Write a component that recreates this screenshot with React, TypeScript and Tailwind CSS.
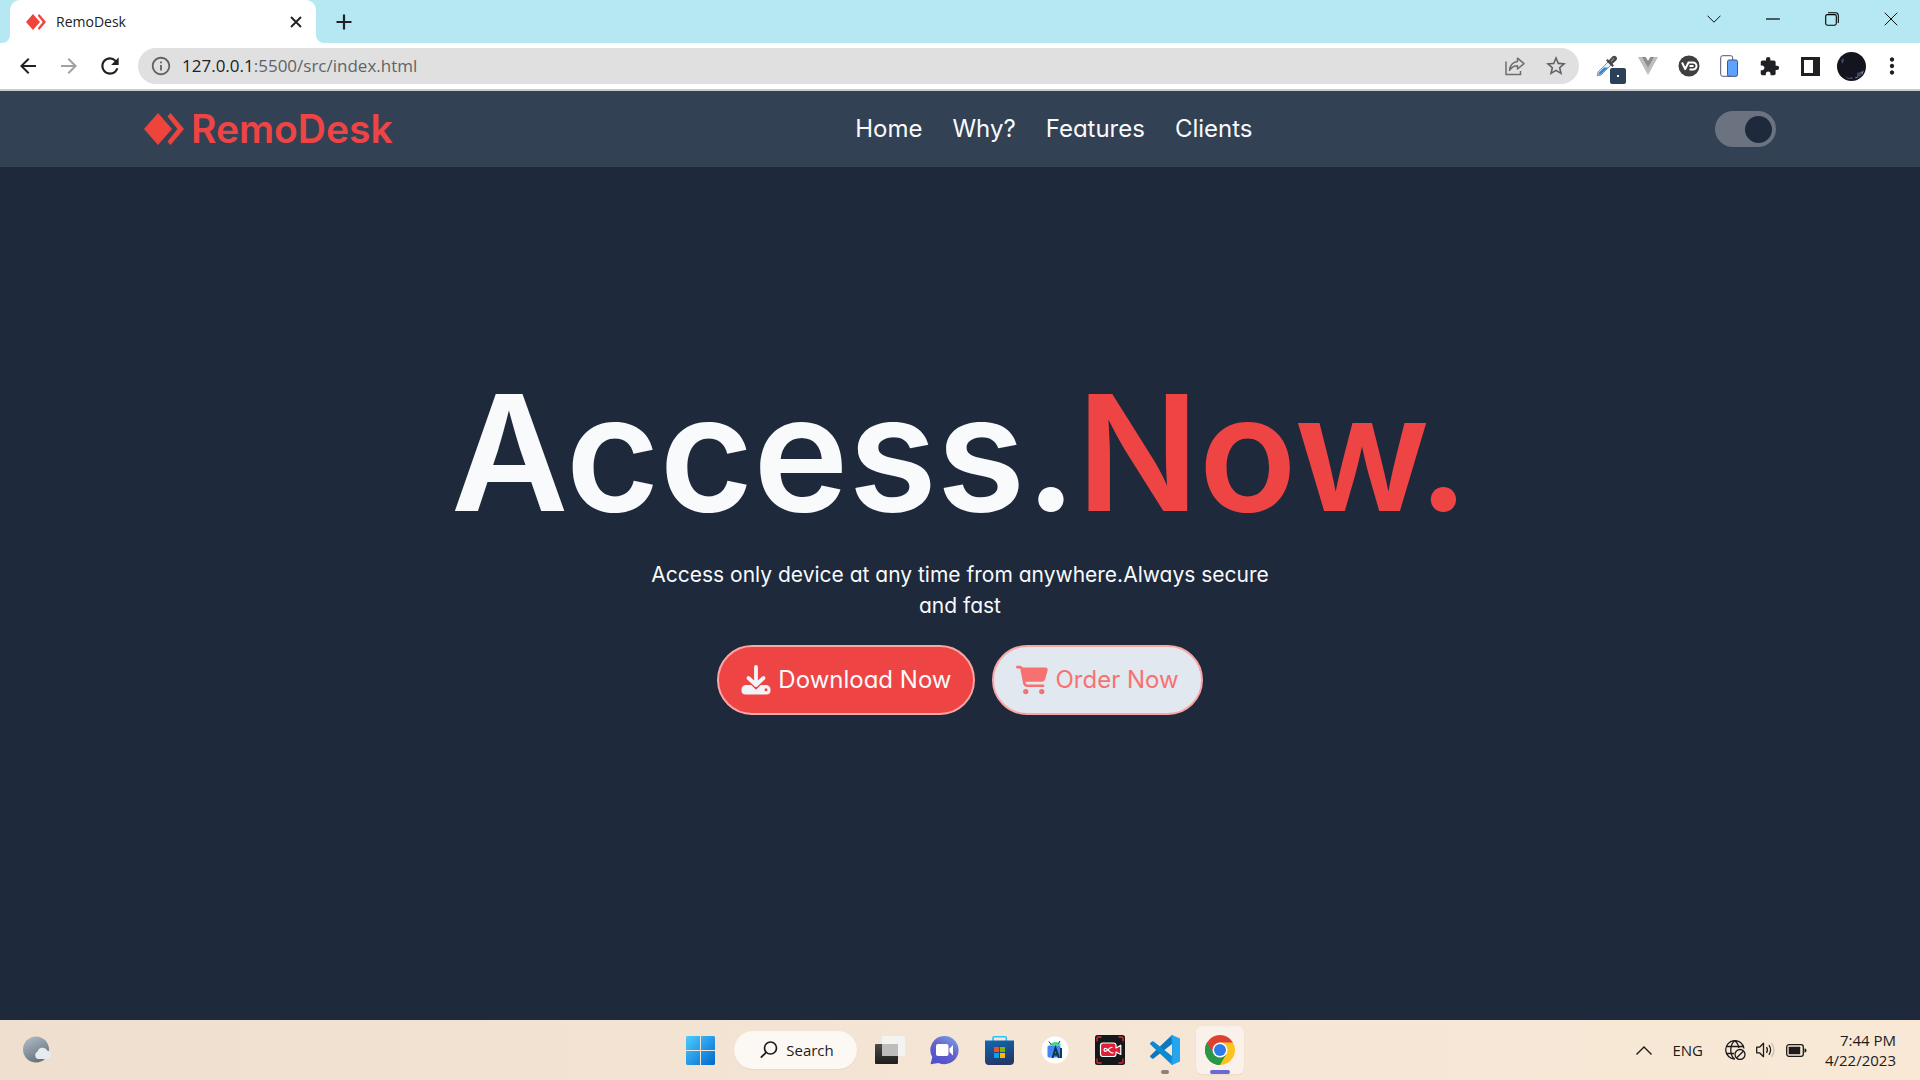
import type { ReactNode } from "react";
import { FaCartShopping } from "react-icons/fa6";
import { MdExtension, MdStarOutline, MdInfoOutline, MdRefresh, MdArrowBack, MdArrowForward, MdMoreVert } from "react-icons/md";

const UI = "font-['Open_Sans',sans-serif]";

function Diamond({ className }: { className: string }) {
  return (
    <svg viewBox="0 0 40 32" className={className} aria-hidden="true">
      <path d="M14 0 28 16 14 32 0 16Z" fill="#ef443b" />
      <path d="M26.5 0 40 16 26.5 32 23.5 28.5 33.5 16 23.5 3.5Z" fill="#ef443b" />
    </svg>
  );
}

function IconButton({ label, className = "", children }: { label: string; className?: string; children: ReactNode }) {
  return (
    <button type="button" aria-label={label} className={`flex items-center justify-center ${className}`}>
      {children}
    </button>
  );
}

function TabStrip() {
  return (
    <div className={`flex h-[43px] bg-[#b5e8f2] ${UI}`}>
      <div className="flex w-2.5 items-end bg-white">
        <div className="h-full w-full rounded-br-lg bg-[#b5e8f2]" />
      </div>
      <div className="flex w-[306px] items-center rounded-t-[10px] bg-white pr-2.5 pl-4">
        <Diamond className="h-4 w-5" />
        <span className="ml-2.5 flex-1 text-[14px] text-[#202124]">RemoDesk</span>
        <IconButton label="Close tab" className="size-5">
          <svg viewBox="0 0 12 12" className="size-3" stroke="#202124" strokeWidth="1.9">
            <path d="M1 1 11 11M11 1 1 11" />
          </svg>
        </IconButton>
      </div>
      <div className="w-2.5 bg-white">
        <div className="h-full w-full rounded-bl-lg bg-[#b5e8f2]" />
      </div>
      <IconButton label="New tab" className="w-9">
        <svg viewBox="0 0 16 16" className="size-4" stroke="#202124" strokeWidth="2.2">
          <path d="M8 0.5v15M0.5 8h15" />
        </svg>
      </IconButton>
      <div className="ml-auto flex h-[37px]">
        <IconButton label="Search tabs" className="w-[59px]">
          <svg viewBox="0 0 14 8" className="h-2 w-3.5" fill="none" stroke="#111">
            <path d="M0.5 0.7 7 7.2 13.5 0.7" />
          </svg>
        </IconButton>
        <IconButton label="Minimize" className="w-[59px]">
          <svg viewBox="0 0 14 2" className="h-0.5 w-3.5">
            <path d="M0 1h14" stroke="#000" strokeWidth="1.2" />
          </svg>
        </IconButton>
        <IconButton label="Restore" className="w-[59px]">
          <svg viewBox="0 0 14 14" className="size-3.5" fill="none" stroke="#000" strokeWidth="1.1">
            <rect x="0.7" y="2.6" width="10.6" height="10.6" rx="1.6" />
            <path d="M3 0.7h7.5q2.8 0 2.8 2.8V11" />
          </svg>
        </IconButton>
        <IconButton label="Close" className="w-[59px]">
          <svg viewBox="0 0 14 14" className="size-3.5" stroke="#111">
            <path d="M0.7 0.7 13.3 13.3M13.3 0.7 0.7 13.3" />
          </svg>
        </IconButton>
      </div>
    </div>
  );
}

function Toolbar() {
  return (
    <div className={`flex h-12 items-start border-b-2 border-[#c8cccb] bg-white pt-[5px] pl-[7px] ${UI}`}>
      <div className="flex h-9">
        <IconButton label="Back" className="w-[41px] text-[#202124]"><MdArrowBack className="size-6" /></IconButton>
        <IconButton label="Forward" className="w-[41px] text-[#a0a1a3]"><MdArrowForward className="size-6" /></IconButton>
        <IconButton label="Reload" className="w-[41px] text-[#202124]"><MdRefresh className="size-[26px]" /></IconButton>
      </div>
      <div className="ml-2 flex h-9 flex-1 items-center rounded-full bg-[#e0e0e0] px-3">
        <MdInfoOutline className="size-[22px] text-[#5f6368]" />
        <div className="ml-2.5 flex-1 text-[17px] text-[#5f6368]">
          <span className="text-[#202124]">127.0.0.1</span>:5500/src/index.html
        </div>
        <IconButton label="Share" className="w-[41px]">
          <svg viewBox="0 0 20 20" className="size-5" fill="none" stroke="#6b6d70" strokeWidth="1.5">
            <path d="M1 5.5V18.5H15.5V15" />
            <path d="M12.5 2.2 19 7.6 12.5 13V9.8Q7.5 9.8 4.5 14.4 5.3 6.3 12.5 5.4Z" strokeLinejoin="round" />
          </svg>
        </IconButton>
        <IconButton label="Bookmark" className="-mr-[9px] w-[41px] text-[#5f6368]"><MdStarOutline className="size-6" /></IconButton>
      </div>
      <div className="mr-2 ml-2 flex h-9 w-[325px] shrink-0">
        <IconButton label="Color picker" className="relative flex-1">
          <svg viewBox="0 0 22 22" className="size-[22px]">
            <path d="M1.2 20.8 2 17 12 7l3 3L5 20Z" fill="#e8f1fa" stroke="#8a9097" />
            <path d="M2.4 19.8 3 17.6 8 12.6h4L4.6 19.4Z" fill="#2f86d6" />
            <path d="M10 5.6 16.4 12l1.6-1.6-1.5-1.6 3.6-3.4a2.6 2.6 0 0 0-3.8-3.8L12.9 5.2 11.6 4Z" fill="#45494d" />
            <path d="M15 6.5 18 3.2" stroke="#8d9296" strokeWidth="1.2" />
          </svg>
          <span className="absolute top-5 right-0.5 flex size-4 items-center justify-center rounded-xs bg-[#2b4159]">
            <span className="size-0.5 bg-white" />
          </span>
        </IconButton>
        <IconButton label="Vue devtools" className="flex-1">
          <svg viewBox="0 0 20 18" className="h-[18px] w-5">
            <path d="M0 0h7.5L10 4.2 12.5 0H20L10 18Z" fill="#bdbdbd" />
            <path d="M4 0h3.7L10 4 12.3 0H16L10 10.5Z" fill="#8c8c8c" />
          </svg>
        </IconButton>
        <IconButton label="Video downloader" className="flex-1">
          <svg viewBox="0 0 22 22" className="size-[22px]" fill="none" stroke="#fff" strokeWidth="2">
            <circle cx="11" cy="11" r="10.5" fill="#3f3f3f" stroke="none" />
            <path d="M4 7.5 7.2 14 10.5 7.5H15a3.5 3.5 0 0 1 0 7h-3.5M11.5 11h4" strokeLinejoin="round" />
          </svg>
        </IconButton>
        <IconButton label="Mobile simulator" className="flex-1">
          <svg viewBox="0 0 18 22" className="h-[22px] w-[18px]" stroke="#4a5578">
            <rect x="0.7" y="0.7" width="12" height="20.6" rx="2" fill="#fff" />
            <rect x="7.5" y="5" width="10" height="16.3" rx="1.5" fill="#5ea4ff" />
          </svg>
        </IconButton>
        <IconButton label="Extensions" className="flex-1 text-[#202124]"><MdExtension className="size-[21px]" /></IconButton>
        <IconButton label="Side panel" className="flex-1">
          <svg viewBox="0 0 19 19" className="size-[19px]">
            <path d="M0 0h19v19H0ZM3 3v13h9V3Z" fill="#202124" fillRule="evenodd" />
          </svg>
        </IconButton>
        <IconButton label="Profile" className="flex-1">
          <svg viewBox="0 0 29 29" className="size-[29px]">
            <circle cx="14.5" cy="14.5" r="14.5" fill="#13141d" />
            <path d="M4 9 6 6l1 2-1.5 4ZM20 21l3-1 4-2-2 5-5 3ZM8 24l4 2 3-1 1 2-5 0Z" fill="#3f4766" />
            <path d="M24 20.5 26.5 19l-1 3ZM18 25l3 0-2 1.5Z" fill="#7d87ae" />
          </svg>
        </IconButton>
        <IconButton label="Menu" className="flex-1 text-[#202124]"><MdMoreVert className="size-[26px]" /></IconButton>
      </div>
    </div>
  );
}

function Navbar() {
  return (
    <header className="flex h-[76px] items-center justify-between bg-[#334155] px-36">
      <a href="#home" className="flex items-center gap-[7px] text-[39px] font-semibold text-[#ef4444]">
        <Diamond className="h-8 w-10" />
        RemoDesk
      </a>
      <nav className="flex gap-[30px] text-[24px] text-[#f8fafc]">
        <a href="#home">Home</a>
        <a href="#why">Why?</a>
        <a href="#features">Features</a>
        <a href="#clients">Clients</a>
      </nav>
      <label className="flex h-9 w-[61px] cursor-pointer items-center justify-end rounded-full bg-[#6b7280] pr-1">
        <input type="checkbox" defaultChecked aria-label="Dark mode" className="size-[27px] appearance-none rounded-full bg-[#1e293b]" />
      </label>
    </header>
  );
}

function Hero() {
  return (
    <main className="flex flex-1 flex-col items-center bg-[#1e293b] pt-[186px] text-[#f8fafc]">
      <h1 className="text-[161px] leading-[200px] font-semibold whitespace-nowrap">
        Access.<span className="text-[#ef4444]">Now.</span>
      </h1>
      <p className="mt-1.5 max-w-[660px] text-center text-[21px] leading-[31px]">
        Access only device at any time from anywhere.Always secure and fast
      </p>
      <div className="mt-6 flex gap-[17px] text-[24px]">
        <button type="button" className="flex h-[70px] items-center gap-[7px] rounded-full border-2 border-[#fca5a5] bg-[#ef4444] px-[22px]">
          <svg viewBox="0 0 30 30" className="size-[30px]" aria-hidden="true">
            <path d="M5 20h5.5l4.5 4.3 4.5-4.3H25a4.5 4.5 0 0 1 4.5 4.5v1A4 4 0 0 1 25.5 29.5h-21A4 4 0 0 1 .5 25.5v-1A4.5 4.5 0 0 1 5 20Z" fill="#f1f5f9" />
            <circle cx="25" cy="24.8" r="1.5" fill="#ef4444" />
            <path d="M15 2.5V19M8 13.5 15 20.5 22 13.5" fill="none" stroke="#ef4444" strokeWidth="6" />
            <path d="M15 2V19M7.5 13 15 20 22.5 13" fill="none" stroke="#f1f5f9" strokeWidth="3.8" strokeLinecap="round" strokeLinejoin="round" />
          </svg>
          Download Now
        </button>
        <button type="button" className="flex h-[70px] items-center gap-[7px] rounded-full border-2 border-[#fca5a5] bg-[#e2e8f0] px-[22px] text-[#f87171]">
          <FaCartShopping className="size-8" />
          Order Now
        </button>
      </div>
    </main>
  );
}

function Taskbar() {
  const slot = "flex size-12 items-center justify-center";
  return (
    <footer className={`flex h-[60px] items-center bg-linear-to-r from-[#eedfce] via-[#f5e5d5] to-[#f8e8d5] text-[#1b1b1b] ${UI}`}>
      <div className="flex flex-1 pl-[22px]">
        <button type="button" aria-label="Weather">
          <svg viewBox="0 0 30 28" className="h-7 w-[30px]">
            <defs>
              <linearGradient id="moon" x1="0" y1="0" x2="0.5" y2="1">
                <stop stopColor="#b3c0ce" />
                <stop offset="1" stopColor="#69737d" />
              </linearGradient>
            </defs>
            <circle cx="14" cy="13.5" r="13" fill="url(#moon)" />
            <path d="M16 23a4 4 0 0 1-.5-7.500 5.500 5.500 0 0 1 10-.8A4.200 4.200 0 0 1 25.500 23Z" fill="#e6ebf0" />
          </svg>
        </button>
      </div>
      <div className="flex items-center gap-[7px] pl-0.5">
        <button type="button" aria-label="Start" className={slot}>
          <svg viewBox="0 0 29 29" className="size-[29px]">
            <defs>
              <linearGradient id="win" x1="0" y1="0" x2="1" y2="1">
                <stop stopColor="#4cccff" />
                <stop offset="1" stopColor="#0069ce" />
              </linearGradient>
            </defs>
            <path d="M1 0h13v14H0V1ZM15 0h13l1 1v13H15ZM0 15h14v14H1l-1-1ZM15 15h14v13l-1 1H15Z" fill="url(#win)" />
          </svg>
        </button>
        <button type="button" className="mx-0.5 flex h-[38px] w-[123px] items-center justify-center gap-2 rounded-full bg-[#fcf8f3] pl-1 text-[15px] shadow-xs">
          <svg viewBox="0 0 18 18" className="size-[18px]" fill="none" stroke="#1b1b1b" strokeWidth="1.7">
            <circle cx="10.5" cy="7" r="6" />
            <path d="M6.2 11.3 0.8 16.7" />
          </svg>
          Search
        </button>
        <button type="button" aria-label="Task view" className={slot}>
          <svg viewBox="0 0 30 28" className="h-7 w-[30px]">
            <defs>
              <linearGradient id="tv" x1="0" y1="0" x2="0" y2="1">
                <stop stopColor="#4a4a4a" />
                <stop offset="1" stopColor="#1d1d1d" />
              </linearGradient>
            </defs>
            <rect y="8" width="23" height="20" rx="1" fill="url(#tv)" />
            <rect x="7" width="23" height="20" rx="1" fill="#f3f3f1" />
            <rect x="7" y="8" width="16" height="12" fill="#bdbdbd" />
          </svg>
        </button>
        <button type="button" aria-label="Chat" className={slot}>
          <svg viewBox="0 0 29 29" className="size-[29px]">
            <defs>
              <linearGradient id="chat" x1="0.9" y1="0" x2="0.3" y2="1">
                <stop stopColor="#74a4ee" />
                <stop offset="0.5" stopColor="#6a62c8" />
                <stop offset="1" stopColor="#4f50cf" />
              </linearGradient>
            </defs>
            <path d="M14.500 0a14 14 0 0 1 0 28.200 16 16 0 0 1-6-1.200L0.500 28.200 2.300 21A14 14 0 0 1 14.500 0Z" fill="url(#chat)" />
            <rect x="6" y="8" width="12.5" height="12" rx="2" fill="#fff" />
            <path d="M19.5 12.5 23 9v10.5l-3.5-3.5Z" fill="#fff" />
          </svg>
        </button>
        <button type="button" aria-label="Microsoft Store" className={slot}>
          <svg viewBox="0 0 29 29" className="size-[29px]">
            <defs>
              <linearGradient id="store" x1="0" y1="0" x2="0.3" y2="1">
                <stop stopColor="#0f68b4" />
                <stop offset="1" stopColor="#23396a" />
              </linearGradient>
            </defs>
            <path d="M8 6V1.500Q8 .8 9 .8H20.500Q21.300.8 21.300 1.800V6" fill="none" stroke="#2fc3f2" strokeWidth="1.6" />
            <path d="M0 4.500h29V25a4 4 0 0 1-4 4H4a4 4 0 0 1-4-4Z" fill="url(#store)" />
            <path d="M9 11h5v5H9Z" fill="#f25022" />
            <path d="M15 11h5v5h-5Z" fill="#7fba00" />
            <path d="M9 17h5v5H9Z" fill="#00a4ef" />
            <path d="M15 17h5v5h-5Z" fill="#ffb900" />
          </svg>
        </button>
        <button type="button" aria-label="Android Studio" className={slot}>
          <svg viewBox="0 0 28 28" className="size-7">
            <circle cx="14" cy="14" r="13.5" fill="#fff" />
            <path d="M9 9.500Q10 6 14.500 6T20 9.500Z" fill="#3ddc84" />
            <path d="M8 5.500l2 3M19 5l-1.500 2.500" stroke="#0d3550" strokeWidth="1" />
            <rect x="6.5" y="9.5" width="13" height="12" rx="1.5" fill="#4285f4" />
            <path d="M11.500 22 14.500 12l3.500 10M12.500 18.500h5M20 12v10" fill="none" stroke="#0b3248" strokeWidth="1.9" />
          </svg>
        </button>
        <button type="button" aria-label="Screen recorder" className={slot}>
          <svg viewBox="0 0 30 30" className="size-[30px]" fill="none">
            <rect width="30" height="30" rx="2.5" fill="#14181a" />
            <path d="M2 6.500V3.500Q2 2 3.500 2H6.500M23.500 2h3Q28 2 28 3.500v3M28 23.500v3q0 1.500-1.500 1.500h-3M6.500 28h-3Q2 28 2 26.500v-3" stroke="#e62a2f" strokeWidth="1.3" />
            <path d="M8 8h10.500Q21 8 21 10.500V13l4.800-2.800V19.500L21 17v2Q21 21.500 18.500 21.500H8Q5.500 21.500 5.500 19V10.500Q5.500 8 8 8Z" fill="#dd1f36" stroke="#fff" strokeWidth="1.2" strokeLinejoin="round" />
            <path d="M17.500 12.500Q15 12 13 14.800 9.500 18 9 14.800 9.500 11.800 13 14.800q3.500 4 5.500 3" stroke="#fff" strokeWidth="1.2" />
          </svg>
        </button>
        <button type="button" aria-label="Visual Studio Code" className={`relative ${slot}`}>
          <svg viewBox="0 0 30 30" className="size-[30px]">
            <path d="M22 0 30 3.500V26.500L22 30Z" fill="#23a5f0" />
            <path d="M22 0 3.500 17.500.5 20.500Q-.5 21 .3 22L2 23.500Q2.800 24 3.600 23.400L22 9Z" fill="#0f77bd" />
            <path d="M22 30 3.500 12.500 .5 9.500Q-.5 9 .3 8L2 6.500Q2.800 6 3.600 6.600L22 21Z" fill="#0b8ad4" />
            <path d="M21 1Q22 0 23 .4V29.600Q22 30 21 29L22 21V9Z" fill="#1f9de9" />
          </svg>
          <span className="absolute bottom-0 left-5 h-1 w-2 rounded-full bg-[#8a8178]" />
        </button>
        <button type="button" aria-label="Chrome" className={`relative rounded-md bg-[#faf1ea] shadow-xs ${slot}`}>
          <svg viewBox="0 0 30 30" className="size-[30px]">
            <path d="M15 15 2.010 7.500A15 15 0 0 1 27.990 7.500Z" fill="#df4031" />
            <path d="M15 15 15 30A15 15 0 0 1 2.010 7.500Z" fill="#2a9747" />
            <path d="M15 15 27.990 7.500A15 15 0 0 1 15 30Z" fill="#fcc31e" />
            <path d="M15 7.500H28L21.500 19 15 15Z" fill="#fcc31e" />
            <path d="M2 7.500 8.500 18.800 15 15V7.500Z" fill="#df4031" />
            <path d="M2.010 7.500 8.500 18.800 15 22.500 21.500 18.800 15 30A15 15 0 0 1 2.010 7.500Z" fill="#2a9747" />
            <circle cx="15" cy="15" r="7.5" fill="#fff" />
            <circle cx="15" cy="15" r="6" fill="#2f7bea" />
          </svg>
          <span className="absolute bottom-0 left-3.5 h-1 w-5 rounded-full bg-[#6a69d6]" />
        </button>
      </div>
      <div className="flex flex-1 items-center justify-end pr-6">
        <button type="button" aria-label="Show hidden icons">
          <svg viewBox="0 0 16 9" className="h-[9px] w-4" fill="none" stroke="#1b1b1b" strokeWidth="1.4">
            <path d="M0.5 8.5 8 1 15.5 8.5" />
          </svg>
        </button>
        <button type="button" className="ml-5 text-[15px]">ENG</button>
        <button type="button" aria-label="Network, volume and battery" className="ml-[22px] flex items-center gap-2.5">
          <svg viewBox="0 0 21 20" className="h-5 w-[21px]" fill="none" stroke="#1b1b1b" strokeWidth="1.3">
            <path d="M10 19A9.200 9.200 0 1 1 19 8.500M9.500 19C4.500 15 4.500 4.500 9.800.8 12.600 3 13.600 5.500 13.800 8M1.500 6.500h17M1.500 13.500H9" />
            <circle cx="15" cy="14.5" r="5" />
            <path d="M11.5 18 18.5 11" />
          </svg>
          <svg viewBox="0 0 20 16" className="h-4 w-5" fill="none" stroke="#1b1b1b" strokeWidth="1.3">
            <path d="M.7 5.200H3.500L7.500 1.300V14.700L3.500 10.800H.7Z" strokeLinejoin="round" />
            <path d="M10.500 5.200q1.800 2.800 0 5.600M13 3.200q3.200 4.800 0 9.600" />
            <path d="M15.500 1.200q5 6.800 0 13.600" stroke="#c9bfb2" />
          </svg>
          <svg viewBox="0 0 21 13" className="h-[13px] w-[21px]">
            <rect x="0.7" y="0.7" width="16.6" height="11.6" rx="2.2" fill="none" stroke="#1b1b1b" strokeWidth="1.3" />
            <rect x="2.7" y="2.7" width="11.5" height="7.6" rx="0.6" fill="#1b1b1b" />
            <path d="M18.500 4.200q2 .3 2 2.300t-2 2.300Z" fill="#1b1b1b" />
          </svg>
        </button>
        <button type="button" className="ml-[18px] text-right text-[15px] leading-5">
          7:44 PM<br />4/22/2023
        </button>
      </div>
    </footer>
  );
}

export default function App() {
  return (
    <div className="flex min-h-screen flex-col font-[Inter,sans-serif] [font-feature-settings:'cv11']">
      <TabStrip />
      <Toolbar />
      <Navbar />
      <Hero />
      <Taskbar />
    </div>
  );
}
